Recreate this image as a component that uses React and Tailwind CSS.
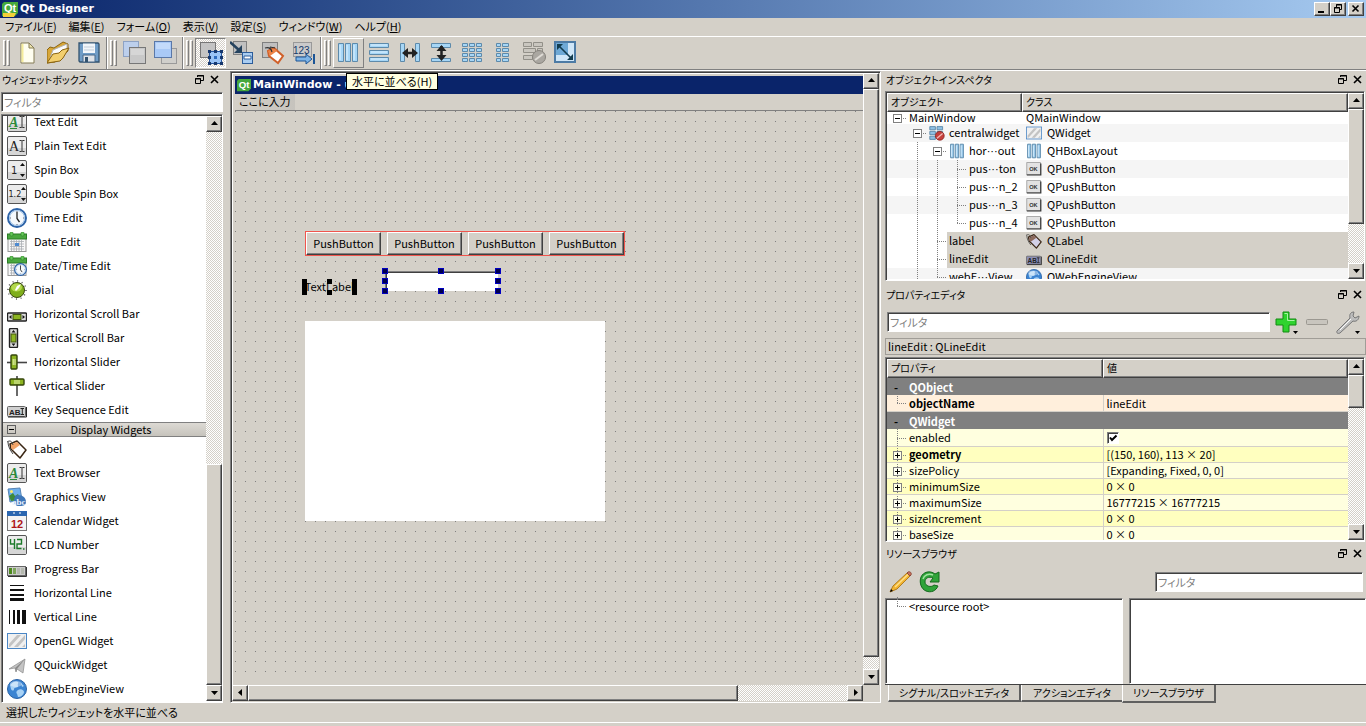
import React, { useState } from 'react';

const RAISED = "bg-[#d4d0c8] border border-t-white border-l-white border-b-[#404040] border-r-[#404040] shadow-[inset_-1px_-1px_0_#808080]";
const SUNKEN = "border border-t-[#808080] border-l-[#808080] border-b-white border-r-white shadow-[inset_1px_1px_0_#404040]";
const DITHER = "bg-[repeating-conic-gradient(#ffffff_0_25%,#d4d0c8_0_50%)] bg-[length:2px_2px]";

const Icon = ({ size = 20, box = 20, children }) => (
  <svg width={size} height={size} viewBox={`0 0 ${box} ${box}`} className="shrink-0" aria-hidden="true">{children}</svg>
);

const QtLogo = ({ size = 16, strip }) => (
  <Icon size={size} box={16}>
    <path d="M2 1h14v11l-3 3H0V3z" fill="#46a83c" />
    <text x="2" y="11" fontSize="11" fontWeight="bold" fontFamily="Liberation Sans, sans-serif" fill="#fff">Qt</text>
    {strip && <path d="M1 12h13l-2 4H1z" fill="#f3cf3a" />}
  </Icon>
);

/* ---------- widget drawings, 20 x 20 ---------- */

const Frame = ({ children }) => (
  <>
    <rect x="0.5" y="0.5" width="19" height="19" rx="1.5" fill="#ececec" stroke="#555" />
    <path d="M1 12h18v7H1z" fill="#d6d6d6" />
    {children}
  </>
);

const ClockShape = () => (
  <>
    <circle cx="10" cy="10" r="9" fill="#f4f8fc" stroke="#2d63a8" strokeWidth="2" />
    <circle cx="10" cy="10" r="7.5" fill="none" stroke="#9fc3e8" />
    <path d="M10 4v6.5l2.5 3.5" fill="none" stroke="#222" strokeWidth="1.3" />
    <path d="M10 3v1M10 16v1M3 10h1M16 10h1" stroke="#667" />
  </>
);

const CalendarShape = () => (
  <>
    <rect x="1" y="4" width="18" height="15.5" fill="#f8f8f8" stroke="#999" />
    <path d="M3 9.5h14M3 12h14M3 14.5h14M3 17h14M4.5 8v11M7 8v11M9.5 8v11M12 8v11M14.5 8v11" stroke="#a9adb2" strokeWidth="0.8" />
    <rect x="0.5" y="2" width="19" height="5" fill="#4aa83f" stroke="#2c7d27" />
    <rect x="3" y="0" width="3" height="4" rx="1" fill="#66c95a" stroke="#2c7d27" strokeWidth="0.6" />
    <rect x="14" y="0" width="3" height="4" rx="1" fill="#66c95a" stroke="#2c7d27" strokeWidth="0.6" />
  </>
);

const TagShape = ({ fill = "#fff", tip = "#f2a468" }) => (
  <>
    <path d="M3 5l7-3 9 9-6 8-9-9z" fill={fill} stroke="#3a2614" strokeWidth="1.5" strokeLinejoin="round" />
    <path d="M4 5l6-2 3 3-7 5-2-2z" fill={tip} />
    <path d="M0 3c3-2 5-1 6 3M1 3c0 4 2 8 5 12" fill="none" stroke="#444" />
  </>
);

const GlobeShape = () => (
  <>
    <circle cx="10" cy="10" r="9.5" fill="#3b84d2" stroke="#2a62a4" />
    <path d="M3 6c3-4 7-4 8-3s-1 2 0 4-4 1-4 3-2 2-3 0zM11 11c3-2 6 0 6 2s-3 5-5 5-1-2-2-3-1-3 1-4zM14 4l3 3-2 1z" fill="#a9d2f5" />
    <ellipse cx="9" cy="5" rx="6" ry="3" fill="#fff" opacity="0.4" />
  </>
);

const Stripes = () => (
  <>
    <rect x="0.5" y="2.5" width="19" height="15" fill="#f0f0f0" stroke="#4a86c5" />
    <path d="M2 13l8-9h4L3 16H2zM7 16L18 4v4l-7 8zM15 16l3-3v3z" fill="#c3c3c3" />
  </>
);

const AbShape = ({ fill = "#d0d0d0" }) => (
  <>
    <rect x="0.5" y="6.5" width="18" height="10" rx="1" fill={fill} stroke="#666" />
    <path d="M1 17h18.5V7" fill="none" stroke="#222" />
    <text x="2" y="14.5" fontSize="8" fontWeight="bold" fontFamily="Liberation Sans, sans-serif" fill="#222">AB</text>
    <path d="M13.5 8.5h3.5M15.3 8.5v6M13.5 14.5h3.5" stroke="#222" />
  </>
);

const AiText = ({ color }) => (
  <Frame>
    <text x="2" y="15" fontSize="14" fontWeight={color === "#222" ? "normal" : "bold"} fontStyle={color === "#222" ? "normal" : "italic"} fontFamily="Liberation Serif, serif" fill={color}>A</text>
    {color !== "#222" && <path d="M3 16.5h7" stroke={color} />}
    <path d="M12.5 4.5h2l.5.5.5-.5h2M15 5v10M12.5 15.5h2l.5-.5.5.5h2" fill="none" stroke="#333" />
  </Frame>
);

const WIDGET_ICONS = {
  textEdit: <AiText color="#2c8a3a" />,
  plainText: <AiText color="#222" />,
  spin: (
    <Frame>
      <text x="4" y="14" fontSize="10" fontFamily="DejaVu Sans, sans-serif" fill="#222">1</text>
      <path d="M13 6l2.5-3L18 6zM13 14l2.5 3 2.5-3z" fill="#111" />
    </Frame>
  ),
  doubleSpin: (
    <Frame>
      <text x="1.5" y="13" fontSize="8" fontFamily="DejaVu Sans, sans-serif" fill="#222">1.2</text>
      <path d="M14 6l2.3-3L19 6zM14 14l2.3 3 2.7-3z" fill="#111" />
    </Frame>
  ),
  time: <ClockShape />,
  date: <><CalendarShape /><rect x="8" y="11" width="4" height="3" fill="#4d8ad0" /></>,
  dateTime: <><CalendarShape /><g transform="translate(7 7) scale(0.65)"><ClockShape /></g></>,
  dial: (
    <>
      <circle cx="10" cy="10" r="9" fill="none" stroke="#555" strokeWidth="1.5" strokeDasharray="1 3.7" />
      <circle cx="10" cy="10" r="7.5" fill="#7fae1c" stroke="#39480f" />
      <ellipse cx="9.5" cy="7.5" rx="5.5" ry="4" fill="#b4d94d" />
      <path d="M8 10l2-4 4-2-2 4-3 3z" fill="#fff" />
    </>
  ),
  hScroll: (
    <>
      <rect x="0.5" y="9" width="19" height="8" rx="1" fill="#ddd" stroke="#222" strokeWidth="1.4" />
      <rect x="6" y="10.5" width="8" height="5" fill="#8db522" stroke="#42560d" />
      <path d="M4.5 11v4L2 13zM15.5 11v4l2.5-2z" fill="#111" />
    </>
  ),
  vScroll: (
    <>
      <rect x="2.5" y="0.5" width="8" height="19" rx="1" fill="#ddd" stroke="#222" strokeWidth="1.4" />
      <rect x="4" y="6" width="5" height="8" fill="#8db522" stroke="#42560d" />
      <path d="M4.5 4.5h4l-2-2.5zM4.5 15.5h4l-2 2.5z" fill="#111" />
    </>
  ),
  hSlider: (
    <>
      <path d="M0 10.5h20" stroke="#444" strokeWidth="1.6" />
      <rect x="4" y="3" width="6" height="14" rx="1" fill="#8db522" stroke="#34450a" strokeWidth="1.4" />
      <path d="M6.2 7v6M8 7v6" stroke="#e8f4b8" />
    </>
  ),
  vSlider: (
    <>
      <path d="M10 0v20" stroke="#444" strokeWidth="1.6" />
      <rect x="3" y="3" width="14" height="6" rx="1" fill="#8db522" stroke="#34450a" strokeWidth="1.4" />
      <path d="M7 5h6M7 7h6" stroke="#e8f4b8" />
    </>
  ),
  keySeq: <AbShape />,
  label: <TagShape />,
  graphics: (
    <>
      <path d="M1 2l12-1 2 12-12 2z" fill="#6fb0ec" stroke="#5683b4" />
      <path d="M2 9l4-3 2 3 3-2 3 6-10 1z" fill="#3e8a3a" />
      <circle cx="4.5" cy="4.5" r="1.5" fill="#ffe96a" />
      <path d="M11 8c5 0 8 3 8 7s-4 4-7 4-5-2-5-5 1-6 4-6z" fill="#3d76b8" />
      <text x="5" y="18" fontSize="9" fontWeight="bold" fontFamily="Liberation Serif, serif" fill="#eaf3ff">abc</text>
    </>
  ),
  calendar: (
    <>
      <rect x="0.5" y="1" width="19" height="18.5" fill="#f4f4f4" stroke="#777" />
      <rect x="0" y="0" width="20" height="5" fill="#2b66b0" />
      <path d="M6 2h2M12 2h2" stroke="#fff" />
      <text x="4" y="17" fontSize="11" fontWeight="bold" fontFamily="Liberation Sans, sans-serif" fill="#b01818">12</text>
    </>
  ),
  lcd: (
    <Frame>
      <path d="M3.5 4v5h4M7.5 4v10M10 4.5h4.5v4.5H10v4.5h4.5" fill="none" stroke="#1c7a2a" strokeWidth="1.4" />
      <path d="M16 14h1.5" stroke="#1c7a2a" strokeWidth="1.5" />
    </Frame>
  ),
  progress: (
    <>
      <rect x="0.5" y="7.5" width="18" height="9" fill="#ccc" stroke="#666" />
      <path d="M1 17.5h18.5V8" fill="none" stroke="#333" />
      <path d="M2 9h3v6H2z" fill="#4c8a1d" />
      <path d="M6 9h3v6H6z" fill="#7da35b" />
      <path d="M10 9h3v6h-3zM14 9h3v6h-3z" fill="#b4b8ae" />
    </>
  ),
  hLine: <path d="M3 2h14v1H3zM3 6h14v2H3zM3 11h14v2H3zM3 15h14v3H3z" fill="#111" />,
  vLine: <path d="M2 3h1v14H2zM6 3h2v14H6zM10 3h3v14h-3zM15 3h4v14h-4z" fill="#111" />,
  stripes: <Stripes />,
  plane: (
    <>
      <path d="M2 14L18 4l-2 14-6-4-1 3-1-4z" fill="#c4c4c4" stroke="#8a8a8a" strokeWidth="0.7" />
      <path d="M8 13L18 4l-8 10-1 3z" fill="#8c8c8c" />
    </>
  ),
  globe: <GlobeShape />,
  hbox: (
    <>
      <path d="M2 1.5h4v17H2zM8 1.5h4v17H8zM14 1.5h4v17h-4z" fill="#9ccbeb" stroke="#5f8cae" strokeWidth="1.2" />
      <path d="M3.2 3v14M9.2 3v14M15.2 3v14" stroke="#dff2ff" />
    </>
  ),
  noLayout: (
    <>
      <path d="M1 2h7v4H1zM10 2h7v4h-7zM1 8h7v4H1zM10 8h7v4h-7zM1 14h7v4H1z" fill="#8fc1e4" stroke="#4f7d9f" />
      <circle cx="13.5" cy="13.5" r="5.5" fill="#c5403c" stroke="#8a1f1c" />
      <path d="M10 16.5l7-6" stroke="#f3b9b6" strokeWidth="1.6" />
    </>
  ),
  ok: (
    <>
      <rect x="1" y="2" width="17" height="15" fill="#e2e2e2" stroke="#999" />
      <path d="M1 17.5h17.5V3" fill="none" stroke="#333" strokeWidth="1.5" />
      <text x="4" y="12.5" fontSize="7" fontWeight="bold" fontFamily="Liberation Sans, sans-serif" fill="#333">OK</text>
    </>
  ),
  tagDark: <TagShape fill="#d3d0e6" tip="#8d6a5c" />,
  abDark: <AbShape fill="#8d8fb5" />,
};

/* ---------- toolbar drawings, 24 x 24 ---------- */

const bars = "#a6d6f6";
const edge = "#5d8aab";

const TOOL_ICONS = {
  newFile: (
    <>
      <path d="M5 2h8l5 5v15H5z" fill="#fffef0" stroke="#857c56" />
      <path d="M13 2v5h5z" fill="#efe6b0" stroke="#857c56" />
      <path d="M6.5 3v18" stroke="#f5ec9c" strokeWidth="2" />
    </>
  ),
  open: (
    <>
      <path d="M0 22V9l3-3 4 1 9-6 5 2v7L8 21z" fill="#d8a738" stroke="#8a6412" />
      <path d="M3 17l3-8 14-6v6z" fill="#fbfbfb" stroke="#b5b5b5" />
      <path d="M0 22l6-9 6-1 3-3 7-2-6 10-3 3z" fill="#f3cf6e" stroke="#8a6412" />
    </>
  ),
  save: (
    <>
      <path d="M1 2h19l1 1v18H2l-1-1z" fill="#6f9cc6" stroke="#33536f" strokeWidth="1.3" />
      <path d="M5 2.5h12V12H5z" fill="#f2f6fa" />
      <path d="M6 6h10M6 9h10" stroke="#c2ced9" />
      <path d="M5 14h12v7H5z" fill="#dfe3e8" stroke="#48688a" />
      <path d="M7 16h3v5H7z" fill="#33536f" />
    </>
  ),
  back: (
    <>
      <rect x="0.5" y="0.5" width="15" height="15" fill="#bccfec" stroke="#8da2c4" />
      <rect x="6.5" y="6.5" width="16" height="16" fill="#c8c8c8" stroke="#777" />
      <path d="M8 14h13V8H8z" fill="#d6d6d6" />
    </>
  ),
  front: (
    <>
      <rect x="7.5" y="7.5" width="15" height="15" fill="#d0cfcb" stroke="#9a9a9a" />
      <rect x="0.5" y="0.5" width="17" height="16" fill="#a9c9f6" stroke="#5a78a8" />
      <path d="M2 2h14v6H2z" fill="#c3dafa" />
    </>
  ),
  editWidgets: (
    <>
      <rect x="1.5" y="1.5" width="15" height="15" fill="#c4c4c4" stroke="#777" />
      <rect x="10.5" y="10.5" width="12" height="12" fill="#9ac4f6" stroke="#2355a0" />
      <path d="M9 9h3v3H9zM15 9h3v3h-3zM21 9h3v3h-3zM9 15h3v3H9zM21 15h3v3h-3zM9 21h3v3H9zM15 21h3v3h-3zM21 21h3v3h-3z" fill="#17386e" />
      <path d="M15 15h3v3h-3z" fill="#2d6cc0" />
    </>
  ),
  editSignals: (
    <>
      <rect x="3.5" y="0.5" width="13" height="13" fill="#c0c0c0" stroke="#808080" />
      <path d="M0 1l9 8" stroke="#24425e" strokeWidth="2.5" />
      <path d="M12 4v8H4z" fill="#24425e" />
      <rect x="12.5" y="11.5" width="10" height="11" fill="#a9cdf2" stroke="#2c5c9a" />
      <path d="M14 15h7v3h-7z" fill="#fff" stroke="#2c5c9a" />
    </>
  ),
  editBuddies: (
    <>
      <rect x="1.5" y="1.5" width="15" height="15" fill="#c0c0c0" stroke="#808080" />
      <path d="M7 10l6-3 9 8-5 7-9-7z" fill="#fff" stroke="#d0602a" strokeWidth="2" />
      <path d="M7 10l6-3 3 3-7 5z" fill="#ee8447" />
      <path d="M4 7c4-1 6 0 7 4M9 6l5 1" fill="none" stroke="#333" strokeWidth="1.2" />
    </>
  ),
  tabOrder: (
    <>
      <rect x="1.5" y="1.5" width="18" height="14" fill="#cacaca" stroke="#999" />
      <text x="1" y="13" fontSize="10" fontFamily="Liberation Sans, sans-serif" fill="#14396a">123</text>
      <path d="M4 16h10v-3l6 5-6 5v-3H4z" fill="#7db4e6" stroke="#1c5596" />
      <path d="M22 13v10" stroke="#1c5596" strokeWidth="2" />
    </>
  ),
  horizontal: (
    <>
      <path d="M1.5 2.5h5v18h-5zM8.5 2.5h5v18h-5zM15.5 2.5h5v18h-5z" fill={bars} stroke={edge} />
      <path d="M3 4v15M10 4v15M17 4v15" stroke="#dff2ff" />
    </>
  ),
  vertical: (
    <>
      <path d="M1.5 2.5h19v4h-19zM1.5 9.5h19v4h-19zM1.5 16.5h19v4h-19z" fill={bars} stroke={edge} />
      <path d="M3 4h16M3 11h16M3 18h16" stroke="#dff2ff" />
    </>
  ),
  hSplit: (
    <>
      <path d="M1.5 2.5h4v18h-4zM16.5 2.5h4v18h-4z" fill={bars} stroke={edge} />
      <path d="M5 12h12" stroke="#222" strokeWidth="2.5" />
      <path d="M9 7v10l-6-5zM13 7v10l6-5z" fill="#222" />
    </>
  ),
  vSplit: (
    <>
      <path d="M1.5 2.5h19v4h-19zM1.5 17.5h19v3h-19z" fill={bars} stroke={edge} />
      <path d="M11.5 5v13" stroke="#222" strokeWidth="2.5" />
      <path d="M6.5 10h10l-5-6zM6.5 14h10l-5 6z" fill="#222" />
    </>
  ),
  grid: (
    <path d="M1.5 2.5h5v3h-5zM8.5 2.5h5v3h-5zM15.5 2.5h5v3h-5zM1.5 7.5h5v3h-5zM8.5 7.5h5v3h-5zM15.5 7.5h5v3h-5zM1.5 12.5h5v3h-5zM8.5 12.5h5v3h-5zM15.5 12.5h5v3h-5zM1.5 17.5h5v3h-5zM8.5 17.5h5v3h-5zM15.5 17.5h5v3h-5z" fill={bars} stroke={edge} />
  ),
  form: (
    <path d="M4.5 2.5h4v3h-4zM10.5 2.5h6v3h-6zM4.5 7.5h4v3h-4zM10.5 7.5h6v3h-6zM4.5 12.5h4v3h-4zM10.5 12.5h6v3h-6zM4.5 17.5h4v3h-4zM10.5 17.5h6v3h-6z" fill={bars} stroke={edge} />
  ),
  breakLayout: (
    <>
      <path d="M0.5 1.5h8v4h-8zM10.5 1.5h9v4h-9zM0.5 7.5h12v4h-12zM14.5 7.5h5v4h-5zM0.5 14.5h9v4h-9z" fill="#c9c6bf" stroke="#929089" />
      <circle cx="16" cy="16" r="6.5" fill="#aaa7a1" stroke="#85827c" />
      <path d="M12 19l8-6" stroke="#dedbd5" strokeWidth="2" />
    </>
  ),
  adjust: (
    <>
      <rect x="1" y="1" width="20" height="20" fill="#cfe6f8" stroke="#4d7ba5" strokeWidth="2" />
      <path d="M2 2h12v12H2z" fill="#6ea9d6" />
      <path d="M5 5l12 12" stroke="#123c4e" strokeWidth="1.6" />
      <path d="M3 3h6l-6 6zM19 19v-6l-6 6z" fill="#123c4e" />
    </>
  ),
};

const TOOL_GROUPS = [
  [['newFile', '新規'], ['open', '開く'], ['save', '保存']],
  [['back', '最背面へ移動'], ['front', '最前面へ移動']],
  [['editWidgets', 'ウィジェットの編集'], ['editSignals', 'シグナル/スロットを編集'], ['editBuddies', 'buddyの編集'], ['tabOrder', 'タブ順序の編集']],
  [['horizontal', '水平に並べる'], ['vertical', '垂直に並べる'], ['hSplit', 'スプリッタで水平に並べる'], ['vSplit', 'スプリッタで垂直に並べる'], ['grid', '格子状に並べる'], ['form', 'フォームレイアウトで並べる'], ['breakLayout', 'レイアウトの解除'], ['adjust', 'サイズを調整']],
];

const MENUS = [['ファイル', 'F'], ['編集', 'E'], ['フォーム', 'O'], ['表示', 'V'], ['設定', 'S'], ['ウィンドウ', 'W'], ['ヘルプ', 'H']];

const INPUT_WIDGETS = [
  ['textEdit', 'Text Edit'], ['plainText', 'Plain Text Edit'], ['spin', 'Spin Box'], ['doubleSpin', 'Double Spin Box'],
  ['time', 'Time Edit'], ['date', 'Date Edit'], ['dateTime', 'Date/Time Edit'], ['dial', 'Dial'],
  ['hScroll', 'Horizontal Scroll Bar'], ['vScroll', 'Vertical Scroll Bar'], ['hSlider', 'Horizontal Slider'],
  ['vSlider', 'Vertical Slider'], ['keySeq', 'Key Sequence Edit'],
];

const DISPLAY_WIDGETS = [
  ['label', 'Label'], ['textEdit', 'Text Browser'], ['graphics', 'Graphics View'], ['calendar', 'Calendar Widget'],
  ['lcd', 'LCD Number'], ['progress', 'Progress Bar'], ['hLine', 'Horizontal Line'], ['vLine', 'Vertical Line'],
  ['stripes', 'OpenGL Widget'], ['plane', 'QQuickWidget'], ['globe', 'QWebEngineView'],
];

// A name with a tail is elided in the middle
const OBJECTS = [
  { guides: ['minus'], name: 'MainWindow', cls: 'QMainWindow' },
  { guides: ['none', 'minus'], icon: 'noLayout', name: 'centralwidget', cls: 'QWidget', clsIcon: 'stripes' },
  { guides: ['none', 'line', 'minus'], icon: 'hbox', name: 'hor', tail: 'out', cls: 'QHBoxLayout', clsIcon: 'hbox' },
  { guides: ['none', 'line', 'line', 'tee'], name: 'pus', tail: 'ton', cls: 'QPushButton', clsIcon: 'ok' },
  { guides: ['none', 'line', 'line', 'tee'], name: 'pus', tail: 'n_2', cls: 'QPushButton', clsIcon: 'ok' },
  { guides: ['none', 'line', 'line', 'tee'], name: 'pus', tail: 'n_3', cls: 'QPushButton', clsIcon: 'ok' },
  { guides: ['none', 'line', 'line', 'elbow'], name: 'pus', tail: 'n_4', cls: 'QPushButton', clsIcon: 'ok' },
  { guides: ['none', 'line', 'tee'], name: 'label', cls: 'QLabel', clsIcon: 'tagDark', selected: true },
  { guides: ['none', 'line', 'tee'], name: 'lineEdit', cls: 'QLineEdit', clsIcon: 'abDark', selected: true },
  { guides: ['none', 'line', 'elbow'], name: 'webE', tail: 'View', cls: 'QWebEngineView', clsIcon: 'globe' },
];

const PROPERTIES = [
  { group: true, name: 'QObject' },
  { name: 'objectName', value: 'lineEdit', bold: true, guide: 'elbow', height: 'h-4', bg: 'bg-[#ffefdc]' },
  { group: true, name: 'QWidget' },
  { name: 'enabled', check: true, guide: 'tee', height: 'h-[17px]', bg: 'bg-[#ffffdf]' },
  { name: 'geometry', value: '[(150, 160), 113 × 20]', bold: true, guide: 'plus', height: 'h-[15px]', bg: 'bg-[#ffffbf]' },
  { name: 'sizePolicy', value: '[Expanding, Fixed, 0, 0]', guide: 'plus', height: 'h-[15px]', bg: 'bg-[#ffffdf]' },
  { name: 'minimumSize', value: '0 × 0', guide: 'plus', height: 'h-[15px]', bg: 'bg-[#ffffbf]' },
  { name: 'maximumSize', value: '16777215 × 16777215', guide: 'plus', height: 'h-[15px]', bg: 'bg-[#ffffdf]' },
  { name: 'sizeIncrement', value: '0 × 0', guide: 'plus', height: 'h-[15px]', bg: 'bg-[#ffffbf]' },
  { name: 'baseSize', value: '0 × 0', guide: 'plus', height: 'h-[15px]', bg: 'bg-[#ffffdf]' },
];

// Tree branch drawing for one indent level
const Guide = ({ kind }) => (
  <svg width="20" height="18" viewBox="0 0 20 18" className="shrink-0" fill="none" aria-hidden="true">
    <g stroke="#808080" strokeDasharray="1 1">
      {(kind === 'line' || kind === 'tee' || kind === 'plus') && <path d="M10.5 0v18" />}
      {kind === 'elbow' && <path d="M10.5 0v9" />}
      {kind !== 'line' && kind !== 'none' && <path d="M10 9.5h10" />}
    </g>
    {(kind === 'minus' || kind === 'plus') && (
      <>
        <rect x="6.5" y="5.5" width="8" height="8" fill="#fff" fillOpacity={kind === 'plus' ? 0.6 : 1} stroke="#808080" />
        <path d="M8 9.5h5" stroke="#000" />
        {kind === 'plus' && <path d="M10.5 7v5" stroke="#000" />}
      </>
    )}
  </svg>
);

const ARROWS = {
  up: "M4 8h7L7.5 4z",
  down: "M4 5h7L7.5 9z",
  left: "M9 3v7L5 6.5z",
  right: "M6 3v7l4-3.5z",
};

const ArrowButton = ({ dir }) => (
  <button type="button" aria-label={dir} className={`flex size-4 shrink-0 items-center justify-center ${RAISED}`}>
    <svg width="14" height="14" viewBox="0 0 14 14"><path d={ARROWS[dir]} fill="#000" /></svg>
  </button>
);

const ScrollBar = ({ before, thumb, after, horizontal }) => (
  <div className={`flex shrink-0 ${horizontal ? 'h-4 flex-1' : 'w-4 flex-col'} ${DITHER}`}>
    <ArrowButton dir={horizontal ? 'left' : 'up'} />
    <div style={{ flexGrow: before }} />
    <div className={RAISED} style={{ flexGrow: thumb }} />
    <div style={{ flexGrow: after }} />
    <ArrowButton dir={horizontal ? 'right' : 'down'} />
  </div>
);

const DockTitle = ({ children }) => (
  <div className="flex h-5 shrink-0 items-center justify-between pr-[3px] pb-[3px] pl-px text-[10px]">
    <h2>{children}</h2>
    <div className="flex gap-1">
      <button type="button" aria-label="フロート">
        <svg width="11" height="11" viewBox="0 0 11 11" fill="none" stroke="#000"><path d="M3.5 3V1.5h6v5H7M3 2h7M1.5 4.5h5v5h-5zM1 5h6" /></svg>
      </button>
      <button type="button" aria-label="閉じる">
        <svg width="11" height="11" viewBox="0 0 11 11" stroke="#000" strokeWidth="1.6"><path d="M2 2l7 7M9 2L2 9" /></svg>
      </button>
    </div>
  </div>
);

const FilterInput = ({ label, className }) => {
  const [value, setValue] = useState('');
  return (
    <input
      type="text"
      aria-label={label}
      placeholder="フィルタ"
      value={value}
      onChange={(e) => setValue(e.target.value)}
      className={`h-5 min-w-0 bg-white px-[2px] placeholder-[#808080] outline-none ${SUNKEN} ${className}`}
    />
  );
};

const TitleBar = () => (
  <header className="flex h-[18px] shrink-0 items-center bg-linear-to-r from-[#0a246a] to-[#a6caf0] pr-[2px] pl-[2px] text-white">
    <QtLogo strip />
    <h1 className="flex-1 pl-[2px] font-bold [font-family:'DejaVu_Sans','Noto_Sans_CJK_JP',sans-serif]">Qt Designer</h1>
    <button type="button" aria-label="最小化" className={`flex h-[14px] w-4 items-center justify-center ${RAISED}`}>
      <svg width="12" height="10" viewBox="0 0 12 10"><path d="M2 7h6v2H2z" /></svg>
    </button>
    <button type="button" aria-label="元に戻す" className={`mr-[2px] flex h-[14px] w-4 items-center justify-center ${RAISED}`}>
      <svg width="12" height="10" viewBox="0 0 12 10" fill="none" stroke="#000"><path d="M4.5 3V.5h5v5H8M4 1h6M2.5 3.5h5v5h-5zM2 4h6" /></svg>
    </button>
    <button type="button" aria-label="閉じる" className={`flex h-[14px] w-4 items-center justify-center ${RAISED}`}>
      <svg width="12" height="10" viewBox="0 0 12 10" stroke="#000" strokeWidth="1.6"><path d="M2.5 1.5l6 6M8.5 1.5l-6 6" /></svg>
    </button>
  </header>
);

const MenuBar = () => (
  <nav className="flex h-[18px] shrink-0 items-center gap-3 pb-[2px] pl-[5px]">
    {MENUS.map(([text, key]) => (
      <button key={key} type="button" className="whitespace-nowrap">{text}(<u>{key}</u>)</button>
    ))}
  </nav>
);

const ToolBar = () => (
  <div className="flex h-[34px] shrink-0 border-t border-b border-t-white border-b-[#808080]">
    {TOOL_GROUPS.map((group, i) => (
      <div key={i} className="flex items-center border-r border-r-[#808080] pr-px shadow-[1px_0_0_#fff] last:border-r-0 last:shadow-none">
        <div className="flex w-3 shrink-0 gap-px pl-[3px]">
          <span className="h-[26px] w-[3px] border border-t-white border-l-white border-r-[#808080] border-b-[#808080]" />
          <span className="h-[26px] w-[3px] border border-t-white border-l-white border-r-[#808080] border-b-[#808080]" />
        </div>
        {group.map(([id, label]) => (
          <button
            key={id}
            type="button"
            aria-label={label}
            className={`relative flex h-[30px] w-[31px] items-center justify-center border ${
              id === 'editWidgets' ? `border-t-[#808080] border-l-[#808080] border-r-white border-b-white ${DITHER}`
                : id === 'horizontal' ? 'border-t-white border-l-white border-r-[#808080] border-b-[#808080]'
                : 'border-transparent'
            }`}
          >
            <Icon size={24} box={24}>{TOOL_ICONS[id]}</Icon>
            {id === 'horizontal' && (
              <span role="tooltip" className="absolute top-[34px] left-3 z-10 flex h-[17px] items-center border border-black bg-[#ffffe1] px-[5px] pb-[2px] whitespace-nowrap">
                水平に並べる(H)
              </span>
            )}
          </button>
        ))}
      </div>
    ))}
  </div>
);

const WidgetRow = ({ icon, name }) => (
  <li className="flex h-6 shrink-0 items-center gap-[7px] pl-1">
    <Icon>{WIDGET_ICONS[icon]}</Icon>
    <span className="pb-[2px]">{name}</span>
  </li>
);

const WidgetBox = () => (
  <aside className="flex w-[223px] shrink-0 flex-col pl-px">
    <DockTitle>ウィジェットボックス</DockTitle>
    <FilterInput label="ウィジェットのフィルタ" className="mt-px mb-[2px] w-full" />
    <div className={`flex min-h-0 flex-1 bg-white py-px pl-px ${SUNKEN}`}>
      <div className="flex min-w-0 flex-1 flex-col justify-end overflow-hidden">
        <ul className="shrink-0">
          {INPUT_WIDGETS.map(([icon, name]) => <WidgetRow key={name} icon={icon} name={name} />)}
        </ul>
        <button type="button" className="flex h-[15px] shrink-0 items-center border-t border-b border-[#808080] bg-linear-to-b from-[#dddad4] to-[#c6c3bc] pl-1">
          <svg width="9" height="9" viewBox="0 0 9 9" fill="none"><rect x="0.5" y="0.5" width="8" height="8" stroke="#606060" /><path d="M2 4.5h5" stroke="#000" /></svg>
          <span className="flex-1 pb-[2px]">Display Widgets</span>
        </button>
        <ul className="shrink-0">
          {DISPLAY_WIDGETS.map(([icon, name]) => <WidgetRow key={name} icon={icon} name={name} />)}
        </ul>
      </div>
      <ScrollBar before={334} thumb={221} after={0} />
    </div>
  </aside>
);

// Selection handles on the line edit, clockwise from the top left corner
const HANDLES = [
  '-top-[3px] -left-[3px]', '-top-[3px] left-[53px]', '-top-[3px] -right-[3px]',
  'top-[7px] -right-[3px]', '-bottom-[3px] -right-[3px]', '-bottom-[3px] left-[53px]',
  '-bottom-[3px] -left-[3px]', 'top-[7px] -left-[3px]',
];

const FormCanvas = () => (
  <div className="relative min-h-0 flex-1 overflow-hidden border-t border-[#808080]">
    <div className="absolute inset-x-0 top-0 bottom-2 bg-[conic-gradient(at_1px_1px,transparent_75%,#808080_0)] bg-[length:10px_10px]" />
    <div className="absolute top-[120px] left-[70px] flex h-[25px] w-[320px] gap-[6px] border border-[#f0554d] bg-[#d4d0c8]">
      {[1, 2, 3, 4].map((n) => (
        <button key={n} type="button" className={`flex-1 pb-[2px] ${RAISED}`}>PushButton</button>
      ))}
    </div>
    <div className="absolute top-[168px] left-[67px] flex h-4 w-[55px] items-center justify-center pb-[2px]">
      TextLabel
      <span className="absolute inset-y-0 left-0 w-[5px] bg-black" />
      <span className="absolute inset-y-0 right-0 w-[5px] bg-black" />
      <span className="absolute top-0 left-[25px] h-[5px] w-[5px] bg-black" />
      <span className="absolute bottom-0 left-[25px] h-[5px] w-[5px] bg-black" />
    </div>
    <div className="absolute top-[160px] left-[150px] h-5 w-[113px]">
      <input type="text" aria-label="lineEdit" readOnly className={`block size-full bg-white outline-none ${SUNKEN}`} />
      {HANDLES.map((pos) => (
        <span key={pos} className={`absolute size-[6px] border border-[#0000c0] bg-[#000050] ${pos}`} />
      ))}
    </div>
    <div className="absolute top-[210px] left-[70px] h-[200px] w-[300px] bg-white" />
  </div>
);

const FormArea = () => (
  <main className={`mr-1 ml-[7px] flex min-w-0 flex-1 p-px ${SUNKEN}`}>
    <div className="flex min-w-0 flex-1 flex-col">
      <section className="flex min-h-0 flex-1 flex-col border-t border-l border-white pt-[2px] pl-[2px]">
        <div className="flex h-[18px] shrink-0 items-center gap-[2px] bg-[#0a246a] pl-[2px] text-white">
          <QtLogo size={14} />
          <h2 className="font-bold whitespace-nowrap [font-family:'DejaVu_Sans','Noto_Sans_CJK_JP',sans-serif]">MainWindow - untitled*</h2>
        </div>
        <div className="flex h-4 shrink-0 items-center">
          <button type="button" className="bg-linear-to-r from-[#d4d0c8] to-[#c6c3bd] px-1 pb-[2px]">ここに入力</button>
        </div>
        <FormCanvas />
      </section>
      <div className="flex shrink-0">
        <ScrollBar horizontal before={0} thumb={491} after={110} />
      </div>
    </div>
    <div className="flex flex-col pb-4">
      <div className="flex flex-1">
        <ScrollBar before={0} thumb={570} after={12} />
      </div>
    </div>
  </main>
);

const HeadCell = ({ children, className }) => (
  <th scope="col" className={`p-0 text-left font-normal ${className}`}>
    <div className={`flex h-[19px] items-center px-[3px] pb-[2px] text-[10px] ${RAISED}`}>{children}</div>
  </th>
);

const ObjectName = ({ name, tail }) => (
  <span className="pb-[2px]">
    {name}
    {tail && <span className="[font-family:'Liberation_Sans',sans-serif]">···</span>}
    {tail}
  </span>
);

const ObjectInspector = () => (
  <section className="flex h-[215px] shrink-0 flex-col">
    <DockTitle>オブジェクトインスペクタ</DockTitle>
    <div className={`mr-px flex h-[190px] bg-white py-px pl-px ${SUNKEN}`}>
      <div className="min-w-0 flex-1 overflow-hidden">
        <table className="w-full table-fixed border-collapse">
          <thead>
            <tr>
              <HeadCell className="w-[135px]">オブジェクト</HeadCell>
              <HeadCell>クラス</HeadCell>
            </tr>
          </thead>
          <tbody>
            {OBJECTS.map((o, i) => (
              <tr key={i} className={o.selected ? 'bg-[#d4d0c8]' : i % 2 ? 'bg-[#f5f5f5]' : 'bg-white'}>
                <td className="p-0">
                  <div className={`flex items-center overflow-hidden ${i === 0 ? 'h-3' : 'h-[18px]'}`}>
                    <span className={`flex shrink-0 ${o.selected ? 'bg-white' : ''}`}>
                      {o.guides.map((g, n) => <Guide key={n} kind={g} />)}
                    </span>
                    <span className="flex items-center gap-1 pl-[2px] whitespace-nowrap">
                      {o.icon && <Icon size={16}>{WIDGET_ICONS[o.icon]}</Icon>}
                      <ObjectName name={o.name} tail={o.tail} />
                    </span>
                  </div>
                </td>
                <td className="p-0">
                  <div className={`flex items-center gap-[5px] overflow-hidden pl-[4px] whitespace-nowrap ${i === 0 ? 'h-3' : 'h-[18px]'}`}>
                    {o.clsIcon && <Icon size={16}>{WIDGET_ICONS[o.clsIcon]}</Icon>}
                    <span className="pb-[2px]">{o.cls}</span>
                  </div>
                </td>
              </tr>
            ))}
          </tbody>
        </table>
      </div>
      <ScrollBar before={0} thumb={116} after={40} />
    </div>
  </section>
);

const PropertyTable = () => {
  const [enabled, setEnabled] = useState(true);
  return (
    <table className="w-full table-fixed border-collapse">
      <thead>
        <tr>
          <HeadCell className="w-[216px]">プロパティ</HeadCell>
          <HeadCell>値</HeadCell>
        </tr>
      </thead>
      <tbody>
        {PROPERTIES.map((p) => p.group ? (
          <tr key={p.name} className="bg-[#808080] text-white">
            <th colSpan={2} scope="colgroup" className="p-0 text-left">
              <div className="flex h-[17px] items-center">
                <span className="w-[22px] pl-[7px] text-black">-</span>
                {p.name}
              </div>
            </th>
          </tr>
        ) : (
          <tr key={p.name} className={p.bg}>
            <td className="border-r border-b border-[#d4d0c8] p-0">
              <div className={`flex items-center overflow-hidden ${p.height} ${p.bold ? 'font-bold' : ''}`}>
                <Guide kind={p.guide} />
                <span className="pb-px pl-[2px]" id={`prop-${p.name}`}>{p.name}</span>
              </div>
            </td>
            <td className="border-b border-[#d4d0c8] p-0">
              <div className={`flex items-center overflow-hidden pl-[3px] whitespace-nowrap ${p.height}`}>
                {p.check ? (
                  <span className="relative flex">
                    <input
                      type="checkbox"
                      aria-labelledby="prop-enabled"
                      checked={enabled}
                      onChange={(e) => setEnabled(e.target.checked)}
                      className={`size-3 appearance-none bg-white ${SUNKEN}`}
                    />
                    {enabled && (
                      <svg width="12" height="12" viewBox="0 0 12 12" className="pointer-events-none absolute inset-0"><path d="M3 5.5l2 2.5L9.5 3.5" fill="none" stroke="#000" strokeWidth="2" /></svg>
                    )}
                  </span>
                ) : <span className="pb-px">{p.value}</span>}
              </div>
            </td>
          </tr>
        ))}
      </tbody>
    </table>
  );
};

const PropertyEditor = () => (
  <section className="flex h-[259px] shrink-0 flex-col">
    <DockTitle>プロパティエディタ</DockTitle>
    <div className="flex h-[32px] shrink-0 items-center gap-1 pr-[6px] pl-[2px]">
      <FilterInput label="プロパティのフィルタ" className="flex-1" />
      <div className="flex gap-[7px]">
        <button type="button" aria-label="追加">
          <Icon size={24} box={24}>
            <path d="M9 2h6v7h7v6h-7v7H9v-7H2V9h7z" fill="#2fd32f" stroke="#128a12" />
            <path d="M10.5 3.5h3v7h7" fill="none" stroke="#a7f5a2" />
            <path d="M19 21h5l-2.5 3z" />
          </Icon>
        </button>
        <button type="button" aria-label="削除">
          <Icon size={24} box={24}><rect x="1.5" y="9.5" width="21" height="5" rx="1" fill="#c8c5be" stroke="#9b9891" /></Icon>
        </button>
        <button type="button" aria-label="設定">
          <Icon size={24} box={24}>
            <path d="M1 21L14 8c-1-4 1-6 4-6l-1 4 2 2 4-2c0 4-3 6-6 5L4 23c-2 1-4 0-3-2z" fill="#bdbdbd" stroke="#777" />
            <path d="M4 20L15 9" stroke="#fafafa" />
            <path d="M19 21h5l-2.5 3z" />
          </Icon>
        </button>
      </div>
    </div>
    <div className="mb-[2px] flex h-[17px] shrink-0 items-center border border-[#a09d97] px-[2px] pb-[2px]">lineEdit : QLineEdit</div>
    <div className={`mr-px flex h-[185px] bg-white py-px pl-px ${SUNKEN}`}>
      <div className="min-w-0 flex-1 overflow-hidden">
        <PropertyTable />
      </div>
      <ScrollBar before={0} thumb={32} after={119} />
    </div>
  </section>
);

const ResourceBrowser = () => (
  <section className="flex min-h-0 flex-1 flex-col">
    <DockTitle>リソースブラウザ</DockTitle>
    <div className="flex h-[33px] shrink-0 items-center gap-[5px] pr-[3px] pl-1">
      <button type="button" aria-label="リソースを編集">
        <Icon size={24} box={24}>
          <path d="M1 22l3-6L18 3l3 3L8 19z" fill="#f2b431" stroke="#b07d22" />
          <path d="M6 17L19 4.5" stroke="#fde08a" strokeWidth="1.5" />
          <path d="M18 3l1-1c2-1 4 1 3 3l-1 1z" fill="#c9735f" stroke="#8d4a3a" />
          <path d="M1 22l1-3 2 2z" />
        </Icon>
      </button>
      <button type="button" aria-label="再読み込み">
        <Icon size={24} box={24}>
          <path d="M20 16c-2 5-7 7-12 5S1 12 3 7s9-7 14-3l4-2v10h-9l3-4c-4-2-8 0-8 4s6 6 9 3z" fill="#2fa339" stroke="#14691d" />
          <path d="M5 9c1-4 6-6 10-4" fill="none" stroke="#a1e3a0" strokeWidth="1.5" />
        </Icon>
      </button>
      <FilterInput label="リソースのフィルタ" className="ml-auto w-[208px]" />
    </div>
    <div className="flex min-h-0 flex-1 gap-[6px]">
      <div className={`flex w-[238px] bg-white p-px ${SUNKEN}`}>
        <div className="flex h-3 items-center">
          <Guide kind="elbow" />
          <span className="pb-px pl-[2px]">&lt;resource root&gt;</span>
        </div>
      </div>
      <div className={`flex-1 bg-white ${SUNKEN}`} />
    </div>
    <div role="tablist" className="flex h-[19px] shrink-0 items-start border-t border-[#404040] pl-[3px] text-[10px]">
      <button type="button" role="tab" aria-selected="false" className="h-[17px] w-[133px] border-r-2 border-b-2 border-l border-l-white border-r-[#606060] border-b-[#606060] whitespace-nowrap">シグナル/スロットエディタ</button>
      <button type="button" role="tab" aria-selected="false" className="h-[17px] w-[101px] border-b-2 border-l border-l-white border-b-[#606060] whitespace-nowrap">アクションエディタ</button>
      <button type="button" role="tab" aria-selected="true" className="h-[18px] w-[94px] border-r-2 border-b-2 border-l border-l-white border-r-[#606060] border-b-[#606060] whitespace-nowrap">リソースブラウザ</button>
    </div>
  </section>
);

const App = () => {
  return (
    <div className="flex h-screen flex-col overflow-hidden bg-[#d4d0c8] text-[11px] leading-[14px] text-black [font-feature-settings:'palt'] [font-family:'Noto_Sans_CJK_JP',sans-serif]">
      <TitleBar />
      <MenuBar />
      <ToolBar />
      <div className="flex min-h-0 flex-1 border-t border-white">
        <WidgetBox />
        <FormArea />
        <div className="flex w-[481px] shrink-0 flex-col">
          <ObjectInspector />
          <PropertyEditor />
          <ResourceBrowser />
        </div>
      </div>
      <footer className="flex h-[23px] shrink-0 flex-col">
        <p className="flex h-5 items-center border-b border-white pb-px pl-[6px]">選択したウィジェットを水平に並べる</p>
      </footer>
    </div>
  );
};

export default App;
